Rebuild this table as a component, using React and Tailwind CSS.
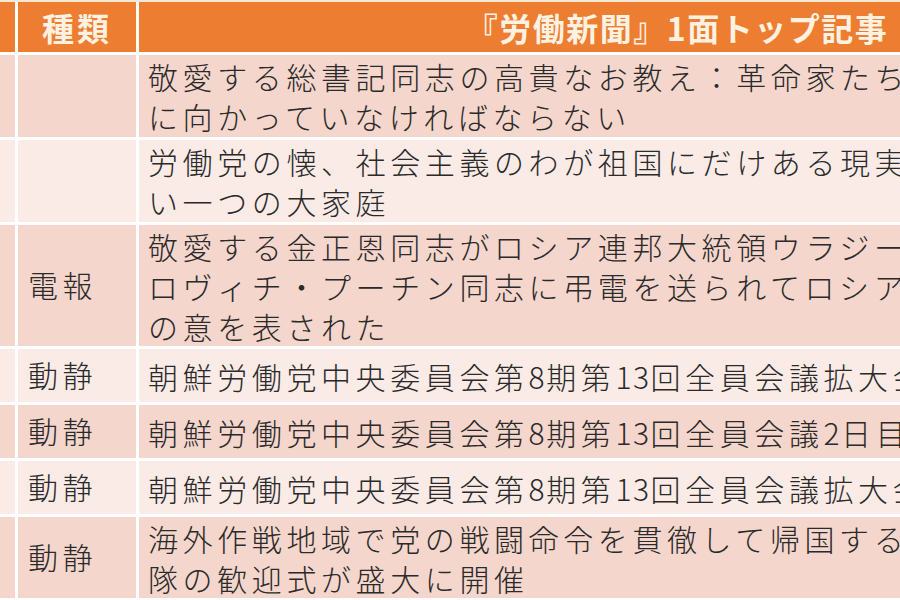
const rows = [
  {
    kind: "",
    lines: [
      "敬愛する総書記同志の高貴なお教え：革命家たちは常に人民",
      "に向かっていなければならない",
    ],
    h: "h-[82px]",
    dark: true,
  },
  {
    kind: "",
    lines: [
      "労働党の懐、社会主義のわが祖国にだけある現実の温か",
      "い一つの大家庭",
    ],
    h: "h-[82px]",
    dark: false,
  },
  {
    kind: "電報",
    lines: [
      "敬愛する金正恩同志がロシア連邦大統領ウラジーミル・ウラジーミ",
      "ロヴィチ・プーチン同志に弔電を送られてロシア国民に哀悼",
      "の意を表された",
    ],
    h: "h-[121px]",
    dark: true,
  },
  {
    kind: "動静",
    lines: ["朝鮮労働党中央委員会第8期第13回全員会議拡大会議開催"],
    h: "h-[53px]",
    dark: false,
  },
  {
    kind: "動静",
    lines: ["朝鮮労働党中央委員会第8期第13回全員会議2日目会議"],
    h: "h-[53px]",
    dark: true,
  },
  {
    kind: "動静",
    lines: ["朝鮮労働党中央委員会第8期第13回全員会議拡大会議閉幕"],
    h: "h-[53px]",
    dark: false,
  },
  {
    kind: "動静",
    lines: [
      "海外作戦地域で党の戦闘命令を貫徹して帰国する部",
      "隊の歓迎式が盛大に開催",
    ],
    h: "h-[81px]",
    dark: true,
  },
];

const font = { fontFamily: '"Noto Sans CJK JP", "Noto Sans", sans-serif' };

// half-width digits sit tighter than the kanji in the original sheet
const renderLine = (line) =>
  line.split(/(\d+)/).map((part, i) =>
    /^\d+$/.test(part) ? (
      <span key={i} className="tracking-[1.5px]">
        {part}
      </span>
    ) : (
      part
    )
  );

const Row = ({ row }) => {
  const bg = row.dark ? "bg-[#f5d6cc]" : "bg-[#fbebe7]";
  return (
    <>
      <div className={`${row.h} ${bg}`} />
      <div className={`${row.h} ${bg} flex items-center pl-[10px]`}>
        <span className="text-[30px] leading-[40px] font-light tracking-[4.5px] text-[#2a2a2a] -mt-[4px]">
          {row.kind}
        </span>
      </div>
      <div className={`${row.h} ${bg} flex flex-col justify-center pl-[9px]`}>
        {row.lines.map((line, i) => (
          <div
            key={i}
            className="whitespace-nowrap text-[30px] leading-[40px] font-light tracking-[4.6px] text-[#2a2a2a]"
          >
            {renderLine(line)}
          </div>
        ))}
      </div>
    </>
  );
};

export default function App() {
  return (
    <div className="w-[900px] h-[600px] overflow-hidden bg-white" style={font}>
      <div className="h-[2px] bg-[#f7e8d8]" />
      <div className="grid grid-cols-[15px_118px_1076px] gap-[3px]">
        <div className="h-[50px] bg-[#ed7d31]" />
        <div className="h-[50px] bg-[#ed7d31] flex items-center justify-center">
          <span className="text-[32px] leading-[40px] font-bold text-[#fdf2e2] tracking-[3px]">種類</span>
        </div>
        <div className="h-[50px] bg-[#ed7d31] flex items-center justify-center">
          <span className="text-[32px] leading-[40px] font-bold text-[#fdf2e2] tracking-[1.5px] whitespace-nowrap">
            『労働新聞』1面トップ記事
          </span>
        </div>
        {rows.map((row, i) => (
          <Row key={i} row={row} />
        ))}
      </div>
    </div>
  );
}
